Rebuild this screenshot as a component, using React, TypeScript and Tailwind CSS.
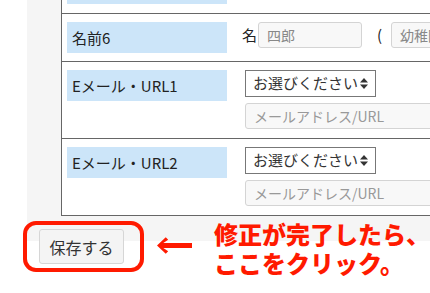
const JP = "font-['Noto_Sans_CJK_JP','Noto_Sans',sans-serif]";

function SortIcon() {
  return (
    <svg width="8" height="11" viewBox="0 0 8 11" className="shrink-0">
      <path d="M4 0 L8 4.5 H0 Z" fill="#333" />
      <path d="M4 11 L8 6.5 H0 Z" fill="#333" />
    </svg>
  );
}

function Label({ text }: { text: string }) {
  return (
    <div className="w-[160px] h-[31px] bg-[#cce5f9] flex items-center pl-[5px] text-[15px] text-[#222] leading-none">
      {text}
    </div>
  );
}

function NameRow({ label, first, second }: { label: string; first: string; second: string }) {
  return (
    <div className="flex h-[48px] border-t border-[#666] pt-[8px]">
      <div className="pl-[5px]">
        <Label text={label} />
      </div>
      <div className="flex items-start pl-[15px]">
        <span className="text-[15px] text-[#222] leading-[26px] mr-[1px]">名</span>
        <div className="w-[104px] h-[26px] bg-[#f8f8f8] border border-[#d4d4d4] rounded-[3px] flex items-center pl-[8px] text-[14px] text-[#888]">
          {first}
        </div>
        <span className="ml-[15px] mr-[9px] text-[15px] text-[#222] leading-[26px]">(</span>
        <div className="w-[104px] h-[26px] bg-[#f8f8f8] border border-[#d4d4d4] rounded-[3px] flex items-center pl-[8px] text-[14px] text-[#888] shrink-0">
          {second}
        </div>
      </div>
    </div>
  );
}

function MailRow({ label }: { label: string }) {
  return (
    <div className="flex h-[77px] border-t border-[#666] pt-[8px]">
      <div className="pl-[5px]">
        <Label text={label} />
      </div>
      <div className="flex flex-col pl-[18px] gap-[6px]">
        <div className="w-[131px] h-[27px] bg-white border border-[#777] flex items-center justify-between pl-[7px] pr-[7px] text-[15px] text-[#333]">
          <span>お選びください</span>
          <SortIcon />
        </div>
        <div className="w-[260px] h-[26px] bg-[#f8f8f8] border border-[#d4d4d4] rounded-[3px] flex items-center pl-[8px] text-[14px] text-[#999]">
          メールアドレス/URL
        </div>
      </div>
    </div>
  );
}

export default function App() {
  return (
    <div className={`w-[430px] h-[293px] bg-white overflow-hidden ${JP}`}>
      <div className="ml-[27px] h-[276px] bg-[#f5f5f5] relative">
        <div className="ml-[34px] bg-white border-l border-b border-[#666] -mt-[35px] w-[500px]">
          <div className="flex h-[48px] pt-[8px]">
            <div className="pl-[5px]">
              <Label text="名前5" />
            </div>
          </div>
          <NameRow label="名前6" first="四郎" second="幼稚園" />
          <MailRow label="Eメール・URL1" />
          <MailRow label="Eメール・URL2" />
        </div>

        <div className="flex items-start mt-[12px]">
          <div className="relative ml-[12px] mt-[1px]">
            <button className="w-[85px] h-[35px] bg-[#f4f4f4] border border-[#d6d6d6] rounded-[3px] text-[16px] text-[#333] flex items-center justify-center">
              保存する
            </button>
            <div className="absolute -left-[16px] -top-[8px] w-[121px] h-[51px] border-[4px] border-[#ff1a00] rounded-[13px]" />
          </div>
          <svg width="36" height="17" viewBox="0 0 36 17" className="ml-[33px] mt-[9px]">
            <path d="M0 8.5 L9 0 L11.5 2.5 L6.5 6 H36 V11 H6.5 L11.5 14.5 L9 17 Z" fill="#ff1a00" />
          </svg>
          <div className="ml-[22px] -mt-[9px] text-[24px] font-black leading-[29px] text-[#ff1a00] whitespace-nowrap">
            修正が完了したら、
            <br />
            ここをクリック。
          </div>
        </div>
      </div>
    </div>
  );
}
